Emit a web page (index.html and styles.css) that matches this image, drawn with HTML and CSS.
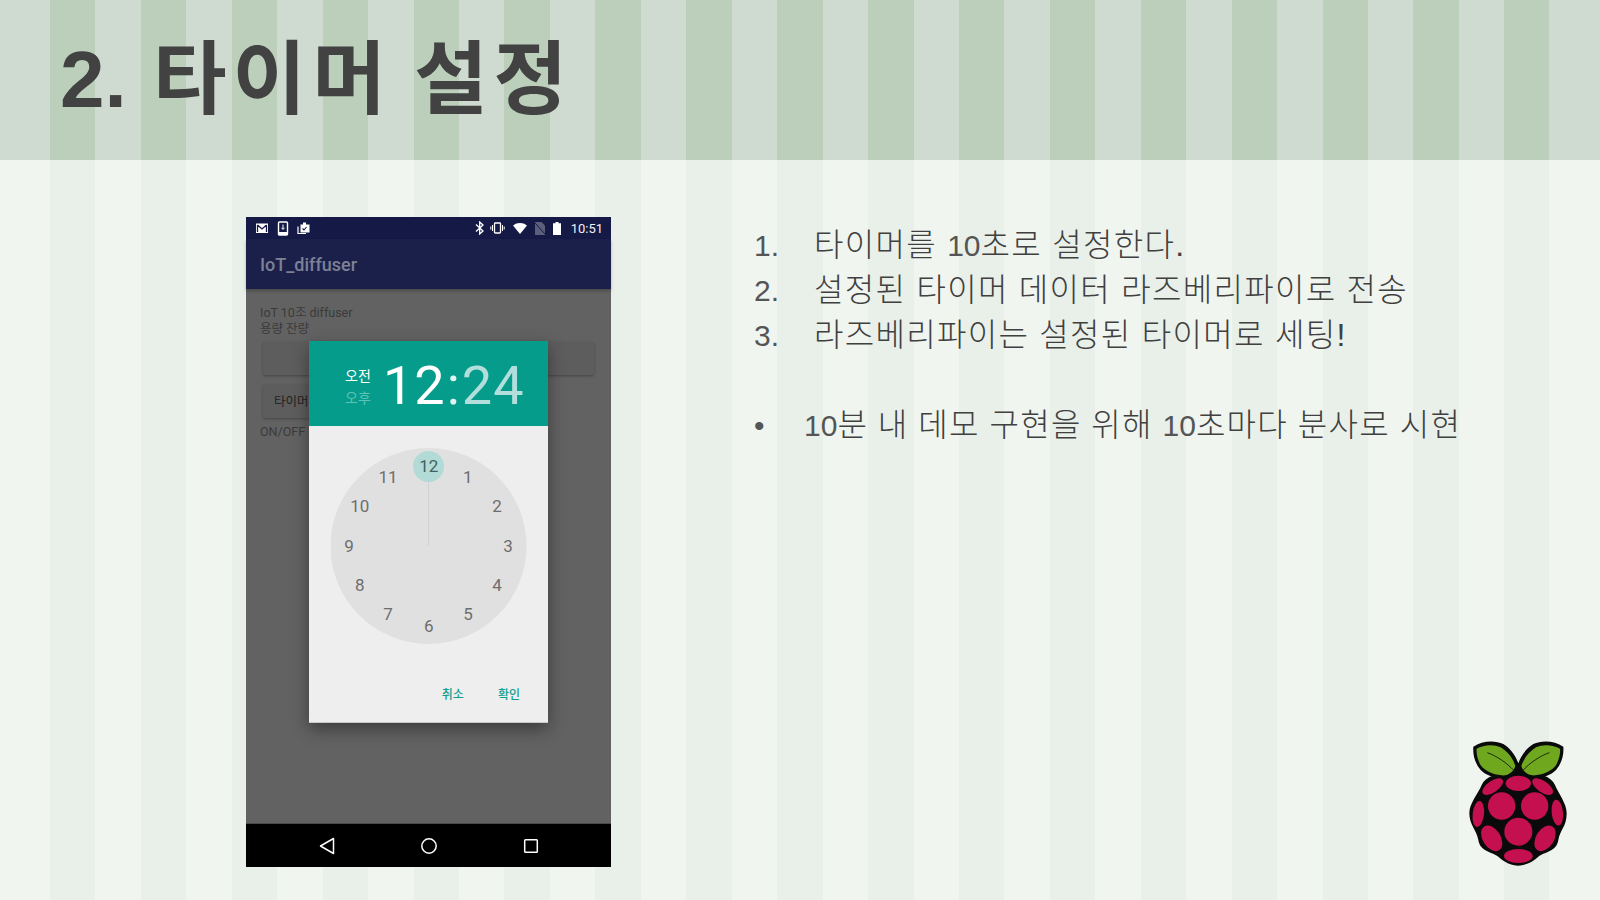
FILE: index.html
```html
<!DOCTYPE html>
<html lang="ko">
<head>
    <meta charset="UTF-8">
    <title>2. 타이머 설정</title>
    <link rel="stylesheet" href="styles.css">
</head>
<body>
<div class="slide">
    <header class="title-bar">
        <h1><span class="num">2. </span>타이머 설정</h1>
    </header>

    <main class="content">
        <div class="phone">
            <div class="status-bar">
                <svg class="icon" width="14" height="12" viewBox="0 0 14 12"><rect x="1" y="1.500" width="12" height="9.500" fill="#fff"/><path d="M2.500 3v7M11.500 3v7M2.500 3L7 7l4.500-4" fill="none" stroke="#141a45" stroke-width="1.300"/></svg>
                <svg class="icon" width="12" height="15" viewBox="0 0 12 15"><rect x="1.500" y="1" width="9" height="13" rx="1" fill="none" stroke="#fff" stroke-width="1.400"/><rect x="1.500" y="11" width="9" height="3" fill="#fff"/><path d="M6 3.500v4.500M4.500 6.800L6 8.500l1.500-1.700" fill="none" stroke="#fff" stroke-width="1"/></svg>
                <svg class="icon" width="14" height="14" viewBox="0 0 14 14"><path d="M1 5.500v7h8" fill="none" stroke="#fff" stroke-width="1.200"/><path d="M3.500 3.500h2.500v-2h3v2h3.500v8h-9z" fill="#fff"/><path d="M5.500 7.500l1.500 1.500 2.500-3" fill="none" stroke="#141a45" stroke-width="1.100"/></svg>
                <span class="status-gap"></span>
                <svg class="icon bt" width="10" height="14" viewBox="0 0 10 14"><path d="M1 3.500l7 6.500-3.300 3v-12l3.300 3-7 6.500" fill="none" stroke="#fff" stroke-width="1.300"/></svg>
                <svg class="icon" width="15" height="12" viewBox="0 0 15 12"><rect x="4.500" y="1" width="6" height="10" rx=".8" fill="none" stroke="#fff" stroke-width="1.300"/><path d="M2.500 3v6M.8 4.500v3M12.500 3v6M14.200 4.500v3" stroke="#fff" stroke-width="1"/></svg>
                <svg class="icon" width="14" height="11" viewBox="0 0 14 11"><path d="M0 2.500C4 -.8 10 -.8 14 2.500L7 11z" fill="#fff"/></svg>
                <svg class="icon" width="10" height="13" viewBox="0 0 10 13"><path d="M0 0h6.500L10 3.500V13H0z" fill="#5c5f7c"/><path d="M0 1l10 11" stroke="#141a45" stroke-width="1"/></svg>
                <svg class="icon" width="8" height="13" viewBox="0 0 8 13"><path d="M2.500 0h3v1.300H8V13H0V1.300h2.500z" fill="#fff"/></svg>
                <span class="clock-text">10:51</span>
            </div>
            <div class="app-bar">IoT_diffuser</div>
            <div class="app-body">
                <p>IoT 10조 diffuser<br>용량 잔량</p>
                <div class="progress"></div>
                <div class="timer-btn">타이머</div>
                <p>ON/OFF</p>
            </div>
            <div class="nav-bar">
                <svg width="16" height="18" viewBox="0 0 16 18"><path d="M14.500 1.500v15L1.500 9z" fill="none" stroke="#fff" stroke-width="1.500" stroke-linejoin="round"/></svg>
                <svg width="18" height="18" viewBox="0 0 18 18"><circle cx="9" cy="9" r="7.200" fill="none" stroke="#fff" stroke-width="1.500"/></svg>
                <svg width="16" height="16" viewBox="0 0 16 16"><rect x="1.700" y="1.700" width="12.600" height="12.600" rx=".8" fill="none" stroke="#fff" stroke-width="1.500"/></svg>
            </div>

            <div class="dialog">
                <div class="dialog-head">
                    <div class="ampm"><span>오전</span><span class="dim">오후</span></div>
                    <div class="time">12<span class="sep">:</span><span class="mins">24</span></div>
                </div>
                <div class="dial-wrap">
                    <svg class="dial" width="196" height="196" viewBox="0 0 196 196">
                        <circle class="face" cx="97.500" cy="98" r="98"/>
                        <path class="hand" d="M97.500 34V98"/>
                        <circle class="pick" cx="97.500" cy="18.500" r="15.500"/>
                        <text class="on" x="97.700" y="24">12</text>
                        <text x="136.700" y="34.700">1</text>
                        <text x="166" y="64">2</text>
                        <text x="177" y="103.700">3</text>
                        <text x="166" y="143">4</text>
                        <text x="137" y="172">5</text>
                        <text x="97.700" y="183.700">6</text>
                        <text x="57" y="172">7</text>
                        <text x="28.700" y="143">8</text>
                        <text x="18" y="103.700">9</text>
                        <text x="28.700" y="64">10</text>
                        <text x="57" y="34.700">11</text>
                    </svg>
                </div>
                <div class="dialog-actions">
                    <span>취소</span>
                    <span>확인</span>
                </div>
            </div>
        </div>

        <div class="notes">
            <ol class="steps">
                <li><b>1.</b><span>타이머를 <i>10</i>초로 설정한다.</span></li>
                <li><b>2.</b><span>설정된 타이머 데이터 라즈베리파이로 전송</span></li>
                <li><b>3.</b><span>라즈베리파이는 설정된 타이머로 세팅!</span></li>
            </ol>
            <ul class="bullets">
                <li><b>•</b><span><i>10</i>분 내 데모 구현을 위해 <i>10</i>초마다 분사로 시현</span></li>
            </ul>
        </div>

        <svg class="logo" width="130" height="150" viewBox="0 0 390 450">
            <path class="rb-black" d="M205 130C240 125 300 130 315 165C325 190 350 220 350 250C350 290 330 300 325 330C320 365 285 365 265 380C250 395 225 407 205 407C185 407 160 395 145 380C125 365 90 365 85 330C80 300 58 285 58 250C58 220 85 190 95 165C110 130 170 125 205 130Z"/>
            <path class="rb-black" d="M70 50C95 32 135 30 160 42C185 58 198 80 205 100C212 80 225 58 250 42C275 30 315 32 340 50C342 75 335 100 318 120C295 145 245 150 205 136C165 150 115 145 92 120C75 100 68 75 70 50Z"/>
            <path class="rb-leaf" d="M80 56C100 44 132 42 152 52C175 66 190 88 196 108C192 124 175 138 155 136C128 134 104 122 92 106C84 92 78 72 80 56Z"/>
            <path class="rb-leaf" d="M330 56C310 44 278 42 258 52C235 66 220 88 214 108C218 124 235 138 255 136C282 134 306 122 318 106C326 92 332 72 330 56Z"/>
            <path class="rb-vein" d="M112 68C140 78 170 98 192 122M298 68C270 78 240 98 218 122"/>
            <ellipse class="rb-berry" cx="205" cy="160" rx="38" ry="23"/>
            <ellipse class="rb-berry" cx="128" cy="170" rx="36" ry="17" transform="rotate(-35 128 170)"/>
            <ellipse class="rb-berry" cx="278" cy="170" rx="36" ry="17" transform="rotate(35 278 170)"/>
            <circle class="rb-berry" cx="155" cy="228" r="41"/>
            <circle class="rb-berry" cx="254" cy="228" r="41"/>
            <ellipse class="rb-berry" cx="85" cy="252" rx="17" ry="39" transform="rotate(6 85 252)"/>
            <ellipse class="rb-berry" cx="322" cy="248" rx="17" ry="39" transform="rotate(-6 322 248)"/>
            <circle class="rb-berry" cx="205" cy="305" r="42"/>
            <ellipse class="rb-berry" cx="125" cy="325" rx="27" ry="42" transform="rotate(-32 125 325)"/>
            <ellipse class="rb-berry" cx="285" cy="325" rx="27" ry="42" transform="rotate(32 285 325)"/>
            <ellipse class="rb-berry" cx="205" cy="378" rx="43" ry="21"/>
        </svg>
    </main>
</div>
</body>
</html>
```

FILE: styles.css
```css
* {
    box-sizing: border-box;
}

body {
    margin: 0;
    font-family: "Liberation Sans", "Noto Sans CJK KR", sans-serif;
}

.slide {
    width: 1600px;
    height: 900px;
    overflow: hidden;
    display: flex;
    flex-direction: column;
    background:
        linear-gradient(90deg, #f0f5f0 50px, transparent 50px, transparent 1549px, #f0f5f0 1549px),
        repeating-linear-gradient(90deg, #e9f0ea -40.9px, #e9f0ea 4.55px, #f0f5f0 4.55px, #f0f5f0 50px);
}

/* title */
.title-bar {
    flex: none;
    height: 160px;
    padding-left: 60px;
    background:
        linear-gradient(90deg, #cfdbd1 50px, transparent 50px, transparent 1549px, #cfdbd1 1549px),
        repeating-linear-gradient(90deg, #bbcfbb -40.9px, #bbcfbb 4.55px, #cfdbd1 4.55px, #cfdbd1 50px);
}

.title-bar h1 {
    margin: 0;
    font-size: 80px;
    font-weight: 700;
    line-height: 159px;
    letter-spacing: 6px;
    word-spacing: -6px;
    color: #424242;
}

.title-bar .num {
    margin-right: 4px;
    letter-spacing: 0;
    word-spacing: 0;
}

.content {
    flex: 1;
    display: flex;
    padding: 57px 20px 20px 246px;
}

/* phone screenshot */
.phone {
    position: relative;
    flex: none;
    width: 365px;
    height: 650px;
    display: flex;
    flex-direction: column;
    background: #626262;
    font-family: Roboto, "Noto Sans CJK KR", sans-serif;
}

.status-bar {
    height: 22px;
    flex: none;
    display: flex;
    align-items: center;
    gap: 8px;
    padding: 0 8px 0 9px;
    background: #141a45;
}

.status-gap {
    flex: 1;
}

.icon {
    display: block;
}

.icon.bt {
    margin-right: -3px;
}

.clock-text {
    margin-left: 2px;
    font-size: 13px;
    color: #f2f2f2;
}

.app-bar {
    height: 50px;
    flex: none;
    padding-left: 14px;
    font-size: 18px;
    font-weight: 500;
    line-height: 52px;
    color: #7d8096;
    background: #1a204a;
    box-shadow: 0 2px 3px rgba(0, 0, 0, 0.25);
}

.app-body {
    flex: 1;
    padding: 16px 14px 0;
    font-size: 12.500px;
    line-height: 16px;
    color: #3a3a3a;
}

.app-body p {
    margin: 0;
}

.progress {
    height: 33px;
    margin: 5px 3px 10px;
    border-radius: 2px;
    background: #5d5d5d;
    box-shadow: 0 1px 3px rgba(0, 0, 0, 0.3);
}

.timer-btn {
    width: 90px;
    height: 33px;
    margin: 0 3px 6px;
    padding-left: 11px;
    border-radius: 2px;
    line-height: 33px;
    color: #222;
    background: #5d5d5d;
    box-shadow: 0 1px 3px rgba(0, 0, 0, 0.3);
}

.nav-bar {
    height: 43px;
    flex: none;
    display: flex;
    align-items: center;
    justify-content: space-between;
    padding: 0 72px 0 73px;
    background: #000;
    box-shadow: 0 -1px 0 #4a4a4a;
}

/* time picker dialog */
.dialog {
    position: absolute;
    left: 63px;
    top: 124px;
    width: 239px;
    height: 382px;
    background: #eee;
    border-bottom: 1px solid #c8c8c8;
    box-shadow: 0 6px 16px rgba(0, 0, 0, 0.4);
}

.dialog-head {
    height: 85px;
    display: flex;
    align-items: center;
    color: #fff;
    background: #069c8b;
}

.ampm {
    display: flex;
    flex-direction: column;
    gap: 6px;
    width: 74px;
    padding: 7px 0 0 36px;
    font-size: 14px;
    line-height: 16px;
}

.ampm .dim {
    color: #5cc2b6;
}

.time {
    padding-top: 5px;
    font-size: 54px;
    line-height: 60px;
    letter-spacing: 1px;
}

.sep {
    margin: 0 1px;
    color: #e0f4f2;
}

.mins {
    color: #b2dfdb;
}

.dial-wrap {
    padding: 22px 0 0 22px;
}

.dial {
    display: block;
}

.face {
    fill: #e0e0e0;
}

.hand {
    fill: none;
    stroke: #cfd4d3;
    stroke-width: 1;
}

.pick {
    fill: #b2dad6;
}

.dial text {
    font-family: Roboto, sans-serif;
    font-size: 17px;
    text-anchor: middle;
    fill: #6e6e6e;
}

.dial text.on {
    fill: #3f6461;
}

.dialog-actions {
    display: flex;
    justify-content: flex-end;
    gap: 34px;
    padding: 41px 28px 0 0;
    font-size: 12px;
    font-weight: 500;
    color: #129e8e;
}

/* notes on the right */
.notes {
    flex: none;
    width: 680px;
    margin-left: 143px;
    padding-top: 6px;
    font-size: 32px;
    font-weight: 300;
    line-height: 45px;
    letter-spacing: 1.300px;
    color: #404040;
}

.notes i {
    font-style: normal;
    font-size: 30px;
    letter-spacing: 0;
    color: #555;
}

.notes b {
    flex: none;
    font-weight: 400;
    font-size: 30px;
    letter-spacing: 0;
    color: #555;
}

.steps,
.bullets {
    margin: 0;
    padding: 0;
    list-style: none;
}

.steps li,
.bullets li {
    display: flex;
    align-items: baseline;
    white-space: nowrap;
}

.steps b {
    width: 60px;
}

.bullets {
    margin-top: 45px;
    word-spacing: -.5px;
}

.bullets b {
    width: 50px;
}

.logo {
    display: block;
    flex: none;
    margin-left: auto;
    align-self: flex-end;
}

.rb-black {
    fill: #0a0a0a;
}

.rb-leaf {
    fill: #6fa81f;
}

.rb-vein {
    fill: none;
    stroke: #1c2a08;
    stroke-width: 3;
}

.rb-berry {
    fill: #c5104f;
}
```
